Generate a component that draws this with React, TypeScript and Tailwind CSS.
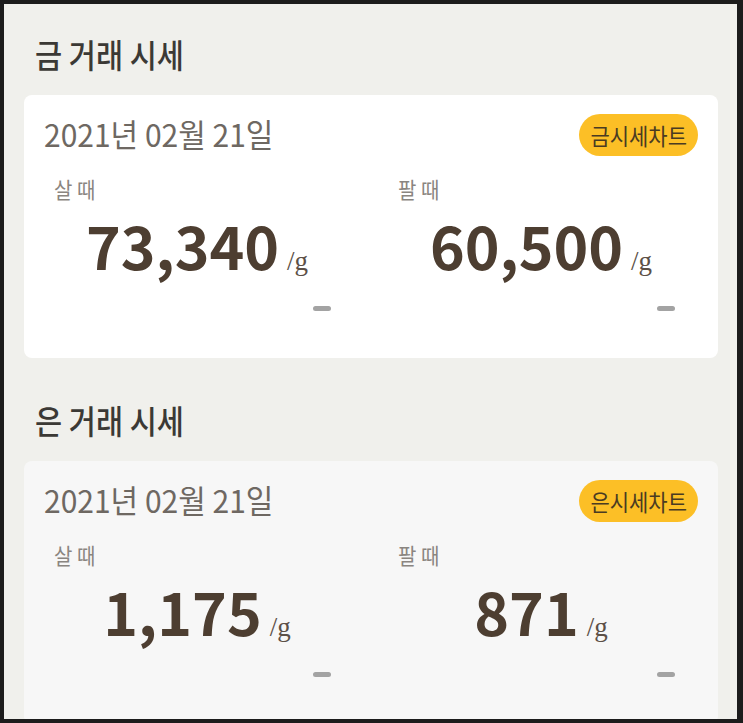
const KR = { fontFamily: '"Noto Sans CJK KR", "Noto Sans", sans-serif' };

function Column({ label, value }: { label: string; value: string }) {
  return (
    <div className="flex flex-col">
      <div className="pl-[10px] h-[24px] mt-[21px]">
        <div className="text-[20px] leading-[24px] text-[#8a8580] scale-y-[1.1]">{label}</div>
      </div>
      <div className="flex items-baseline justify-center mt-[14px] h-[60px]">
        <span className="text-[59px] leading-[60px] font-bold text-[#4d3e31]">{value}</span>
        <span
          className="ml-[8px] text-[27px] leading-[60px] text-[#5c5047]"
          style={{ fontFamily: '"Liberation Serif", "DejaVu Serif", serif' }}
        >
          /g
        </span>
      </div>
      <div className="flex justify-end pr-[19px] mt-[31px]">
        <div className="w-[18px] h-[5px] rounded-full bg-[#a3a3a3]" />
      </div>
    </div>
  );
}

function Section({
  title,
  badge,
  buy,
  sell,
  cardBg,
}: {
  title: string;
  badge: string;
  buy: string;
  sell: string;
  cardBg: string;
}) {
  return (
    <div>
      <div className="pl-[11px] h-[91px] pt-[30px]">
        <div className="text-[29.5px] leading-[40px] font-medium text-[#3b3935] scale-y-[1.1]">{title}</div>
      </div>
      <div className={`${cardBg} rounded-[8px] h-[263px] pt-[19px] pl-[20px] pr-[20px]`}>
        <div className="flex items-start justify-between h-[42px]">
          <div className="text-[30px] leading-[38px] text-[#6e6862] scale-y-[1.05]">2021년 02월 21일</div>
          <div className="h-[42px] px-[11px] rounded-full bg-[#fcbf26] flex items-center">
            <span className="text-[21px] leading-[28px] text-[#4a3b22] scale-y-[1.1]">{badge}</span>
          </div>
        </div>
        <div className="grid grid-cols-2 gap-x-[38px] w-[650px]">
          <Column label="살 때" value={buy} />
          <Column label="팔 때" value={sell} />
        </div>
      </div>
    </div>
  );
}

export default function App() {
  return (
    <div className="w-[743px] h-[723px] bg-[#1c1c1c] pt-[4px] pl-[4px] pr-[6px] pb-[4px]" style={KR}>
      <div className="h-full bg-[#f0f0ec] overflow-hidden pl-[20px] pr-[19px]">
        <Section title="금 거래 시세" badge="금시세차트" buy="73,340" sell="60,500" cardBg="bg-white" />
        <div className="h-[12px]" />
        <Section title="은 거래 시세" badge="은시세차트" buy="1,175" sell="871" cardBg="bg-[#f7f7f7]" />
      </div>
    </div>
  );
}
